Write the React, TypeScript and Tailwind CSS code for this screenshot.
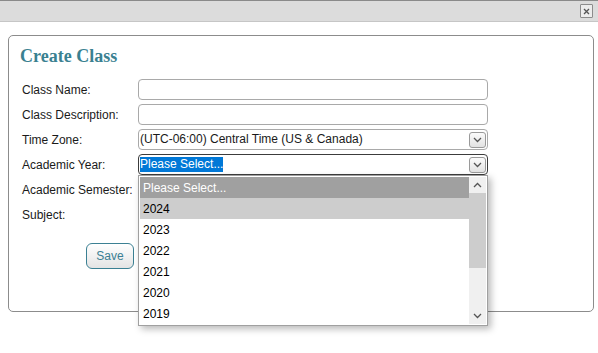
import React from "react";

const Chevron = ({ dir = "down" }: { dir?: "down" | "up" }) => (
  <svg width="9" height="6" viewBox="0 0 9 6" className="block">
    {dir === "down" ? (
      <polyline points="1,1 4.5,4.5 8,1" fill="none" stroke="#555" strokeWidth="1.3" />
    ) : (
      <polyline points="1,5 4.5,1.5 8,5" fill="none" stroke="#555" strokeWidth="1.3" />
    )}
  </svg>
);

const ArrowBox = () => (
  <div className="absolute right-[1px] top-[2px] w-[17px] h-[16px] rounded-[3px] border border-[#9a9a9a] bg-gradient-to-b from-[#fbfbfb] to-[#e2e2e2] flex items-center justify-center">
    <Chevron />
  </div>
);

const Input = () => (
  <div className="w-[350px] h-[21px] rounded-[4px] border border-[#a9a9a9] bg-white" />
);

const Select = ({ children, focused = false }: { children?: React.ReactNode; focused?: boolean }) => (
  <div
    className={
      "relative w-[350px] h-[21px] rounded-[4px] border bg-white flex items-center pl-[1px] text-[12px] leading-[15px] " +
      (focused ? "border-[#3c3c3c]" : "border-[#a9a9a9]")
    }
  >
    {children}
    <ArrowBox />
  </div>
);

const Row = ({ label, children }: { label: string; children: React.ReactNode }) => (
  <div className="flex items-center h-[21px] mb-[4px]">
    <div className="w-[118px] pl-[2px] text-[12px] text-[#1a1a1a] whitespace-nowrap">{label}</div>
    {children}
  </div>
);

export default function App() {
  const items = ["2024", "2023", "2022", "2021", "2020", "2019"];
  return (
    <div
      className="relative w-[598px] h-[353px] bg-white overflow-hidden text-[#1a1a1a]"
      style={{ fontFamily: '"Liberation Sans", Arial, sans-serif' }}
    >
      {/* top bar */}
      <div className="h-[22px] border-t border-b border-t-[#8a8a8a] border-b-[#c6c6c6] bg-[#dcdcdc] flex justify-end items-start pr-[5px] pt-[3px]">
        <div className="w-[13px] h-[14px] border border-[#8c8c8c] rounded-[1px] bg-[#ececec] flex items-center justify-center">
          <svg width="7" height="7" viewBox="0 0 7 7">
            <path d="M1 1 L6 6 M6 1 L1 6" stroke="#555" strokeWidth="1.3" />
          </svg>
        </div>
      </div>

      {/* panel */}
      <div className="mt-[13px] ml-[8px] w-[586px] h-[277px] border border-[#8c8c8c] rounded-[5px] pl-[11px] pt-[9px]">
        <div
          className="text-[18px] leading-[22px] font-bold text-[#3a8191]"
          style={{ fontFamily: '"Liberation Serif", "Times New Roman", serif' }}
        >
          Create Class
        </div>
        <div className="mt-[12px]">
          <Row label="Class Name:">
            <Input />
          </Row>
          <Row label="Class Description:">
            <Input />
          </Row>
          <Row label="Time Zone:">
            <Select>
              <span>(UTC-06:00) Central Time (US &amp; Canada)</span>
            </Select>
          </Row>
          <Row label="Academic Year:">
            <Select focused>
              <span className="bg-[#0078d7] text-white">Please Select...</span>
            </Select>
          </Row>
          <Row label="Academic Semester:">
            <Select />
          </Row>
          <Row label="Subject:">
            <Select />
          </Row>
        </div>
        <div className="mt-[18px] ml-[66px]">
          <button className="w-[48px] h-[26px] rounded-[6px] border border-[#3b8093] bg-gradient-to-b from-[#ffffff] to-[#e4e4e4] text-[12px] text-[#3b7f93]">
            Save
          </button>
        </div>
      </div>

      {/* open dropdown list */}
      <div className="absolute left-[138px] top-[175px] w-[350px] h-[151px] border border-[#a0a0a0] bg-white p-[1px] flex shadow-[3px_3px_7px_rgba(0,0,0,0.28)]">
        <div className="w-[330px] text-[12px]">
          <div className="h-[21px] bg-[#a0a0a0] text-white flex items-center pl-[3px]">Please Select...</div>
          {items.map((y, i) => (
            <div
              key={y}
              className={"h-[21px] flex items-center pl-[3px] text-black " + (i === 0 ? "bg-[#cdcdcd]" : "")}
            >
              {y}
            </div>
          ))}
        </div>
        <div className="w-[17px] h-[147px] bg-[#f0f0f0] flex flex-col">
          <div className="h-[16px] flex items-center justify-center">
            <Chevron dir="up" />
          </div>
          <div className="h-[75px] bg-[#cdcdcd]" />
          <div className="flex-1" />
          <div className="h-[16px] flex items-center justify-center">
            <Chevron dir="down" />
          </div>
        </div>
      </div>
    </div>
  );
}
